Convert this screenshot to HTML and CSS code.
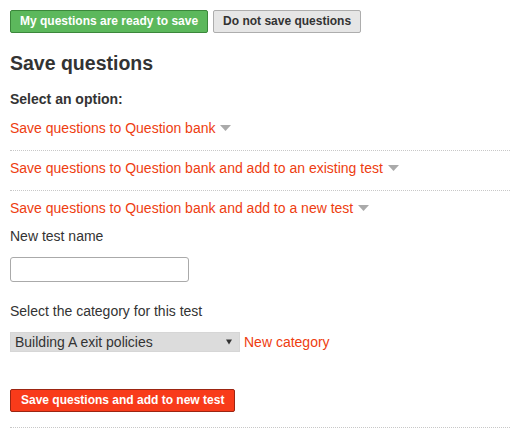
FILE: index.html
```html
<!DOCTYPE html>
<html lang="en">
<head>
<meta charset="utf-8">
<title>Save questions</title>
<link rel="stylesheet" href="styles.css">
</head>
<body>
<main class="page">
  <div class="actions">
    <button class="btn btn-green" type="button">My questions are ready to save</button>
    <button class="btn btn-gray" type="button">Do not save questions</button>
  </div>
  <h2 class="title">Save questions</h2>
  <p class="prompt">Select an option:</p>
  <div class="option">
    <a class="opt-link" href="#">Save questions to Question bank<svg class="caret" width="11" height="6" viewBox="0 0 11 6"><path d="M0 0H11L5.5 6Z" fill="#aaa"/></svg></a>
  </div>
  <div class="option">
    <a class="opt-link" href="#">Save questions to Question bank and add to an existing test<svg class="caret" width="11" height="6" viewBox="0 0 11 6"><path d="M0 0H11L5.5 6Z" fill="#aaa"/></svg></a>
  </div>
  <div class="option option-open">
    <a class="opt-link" href="#">Save questions to Question bank and add to a new test<svg class="caret" width="11" height="6" viewBox="0 0 11 6"><path d="M0 0H11L5.5 6Z" fill="#aaa"/></svg></a>
    <label class="field-label" for="testname">New test name</label>
    <input class="text-input" id="testname" type="text">
    <label class="field-label field-label-2" for="category">Select the category for this test</label>
    <div class="cat-row">
      <span class="select-wrap">
        <select class="select" id="category"><option>Building A exit policies</option></select>
        <svg class="select-arrow" width="6" height="6" viewBox="0 0 6 6"><path d="M0 0.5H6L3 5.5Z" fill="#333"/></svg>
      </span>
      <a class="opt-link" href="#">New category</a>
    </div>
    <button class="btn btn-red" type="button">Save questions and add to new test</button>
  </div>
</main>
</body>
</html>
```
FILE: styles.css
```css
html, body {
  margin: 0;
  padding: 0;
  background: #fff;
}
body {
  font-family: "Liberation Sans", Arial, sans-serif;
  color: #333;
  font-size: 14px;
  line-height: 20px;
}
.page {
  padding: 10px 0 0 10px;
  width: 500px;
}
.actions {
  display: flex;
  gap: 5px;
}
.btn {
  font-family: "Liberation Sans", Arial, sans-serif;
  font-weight: bold;
  font-size: 12px;
  line-height: 15px;
  padding: 3px 9px;
  border: 1px solid;
  border-radius: 2px;
  cursor: pointer;
  margin: 0;
}
.btn-green {
  background: #5cb85c;
  border-color: #3b873b;
  color: #fff;
}
.btn-gray {
  background: #e6e6e6;
  border-color: #adadad;
  color: #333;
}
.btn-red {
  background: #f83b1a;
  border-color: #9c2512;
  color: #fff;
  display: block;
  margin-top: 37px;
  padding: 3px 10px;
}
.title {
  font-size: 19.5px;
  line-height: 24px;
  font-weight: bold;
  margin: 18px 0 0;
}
.prompt {
  font-weight: bold;
  margin: 14px 0 0;
}
.option {
  padding: 7px 0 12px;
  border-bottom: 1px dotted #c8c8c8;
}
.prompt + .option {
  margin-top: 2px;
}
.option-open {
  padding-bottom: 15px;
}
.opt-link {
  color: #ee3d10;
  text-decoration: none;
}
.caret {
  margin-left: 5px;
  vertical-align: 2px;
}
.field-label {
  display: block;
  margin-top: 8px;
}
.field-label-2 {
  margin-top: 19px;
}
.text-input {
  display: block;
  box-sizing: border-box;
  width: 179px;
  height: 25px;
  margin-top: 11px;
  border: 1px solid #aaa;
  border-radius: 3px;
  padding: 2px 4px;
  font: 14px "Liberation Sans", Arial, sans-serif;
}
.cat-row {
  display: flex;
  align-items: center;
  gap: 4px;
  margin-top: 11px;
  height: 20px;
}
.select-wrap {
  position: relative;
  display: block;
  width: 230px;
  height: 20px;
}
.select {
  appearance: none;
  -webkit-appearance: none;
  box-sizing: border-box;
  width: 230px;
  height: 20px;
  margin: 0;
  border: 1px solid #d6d6d6;
  border-radius: 0;
  background: #dcdcdc;
  color: #333;
  font: 14px/18px "Liberation Sans", Arial, sans-serif;
  padding: 0 20px 0 4px;
}
.select-arrow {
  position: absolute;
  right: 8px;
  top: 7px;
  pointer-events: none;
}
```
